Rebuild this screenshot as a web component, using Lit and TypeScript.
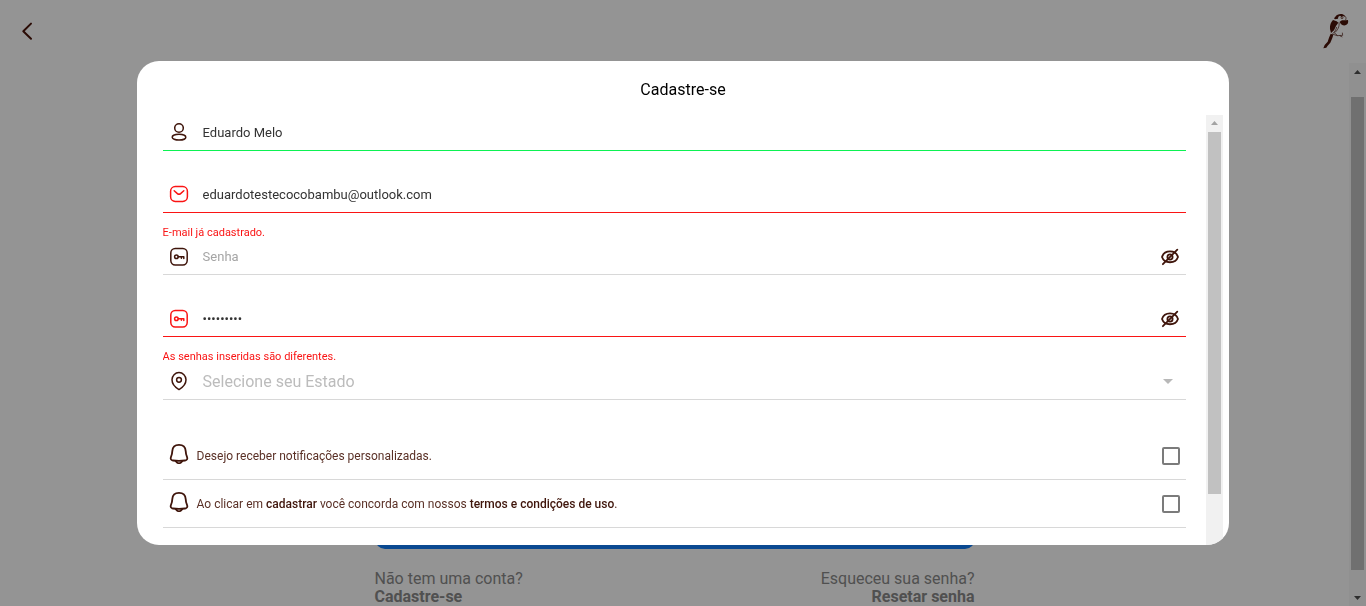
import { LitElement, html, css, svg, nothing } from "lit";
import { customElement, property } from "lit/decorators.js";
import { classMap } from "lit/directives/class-map.js";

const icons = {
  user: svg`<circle cx="10" cy="6" r="4.3"/><ellipse cx="10" cy="15.2" rx="6.8" ry="2.9"/>`,
  mail: svg`<rect x="1.6" y="2.6" width="16.8" height="14.8" rx="4.6"/><path d="M5.2 6.800 8.4 9.6q1.6 1.4 3.2 0l3.200-2.800"/>`,
  key: svg`<rect x="1.8" y="2.600" width="16.4" height="16.4" rx="4.4"/><circle cx="7.4" cy="10.800" r="1.8"/><path d="M9.2 10.800h5.6v1.6M12.4 10.800v1.4"/>`,
  pin: svg`<path d="M10 18.600c-2.200-1.300-7-5-7-9.800a7 7.200 0 0 1 14 0c0 4.800-4.800 8.500-7 9.800z"/><circle cx="10" cy="8.800" r="2.400"/>`,
  bell: svg`<path d="M10 .9c-4.300 0-6.500 2.900-6.700 6.200-.1 2.400-.4 3.800-1.300 5.700-.9 2 .1 3.500 2 3.700q6 .6 12 0c1.900-.2 2.900-1.700 2-3.700-.9-1.900-1.200-3.300-1.300-5.700C16.500 3.800 14.300.9 10 .9z"/><path d="M6.800 17.200q3.200 4.200 6.400 0"/>`,
  eyeOff: svg`<path d="M2 11C4.400 3.600 15.600 3.600 18 11 15.600 18 4.400 18 2 11z"/><circle cx="10" cy="11" r="2.600"/><path d="M17.300 3.600 2.900 18.200"/>`,
};

@customElement("scroll-rail")
export class ScrollRail extends LitElement {
  @property({ type: Number }) start = 0;
  @property({ type: Number }) size = 80;
  @property({ type: Boolean }) down = false;
  @property({ type: Boolean }) strong = false;

  static styles = css`
    :host { display: flex; flex-direction: column; flex: none; width: 17px; background: #f1f1f1; }
    :host([strong]) { background: #f8f8f8; }
    .cap { flex: none; height: 17px; display: flex; align-items: center; justify-content: center; color: #a3a3a3; }
    .strong { color: #505050; }
    .lane { flex: 1; min-height: 0; display: flex; flex-direction: column; padding: 0 2px; }
    .thumb { flex: none; background: #c1c1c1; }
  `;

  render() {
    const cap = classMap({ cap: true, strong: this.strong });
    return html`
      <div class=${cap}><svg width="7" height="4" viewBox="0 0 7 4"><path d="M3.500 0 7 4H0z" fill="currentColor"/></svg></div>
      <div class="lane">
        <div style="height:${this.start}%"></div>
        <div class="thumb" style="height:${this.size}%"></div>
      </div>
      ${this.down
        ? html`<div class=${cap}><svg width="7" height="4" viewBox="0 0 7 4"><path d="M0 0h7L3.500 4z" fill="currentColor"/></svg></div>`
        : nothing}
    `;
  }
}

@customElement("app-root")
export class AppRoot extends LitElement {
  static styles = css`
    :host {
      display: block;
      font-family: Roboto, "Liberation Sans", sans-serif;
      font-size: 16px;
      color: #000;
    }
    *, *::before, *::after { box-sizing: border-box; }
    button { font: inherit; color: inherit; border: 0; padding: 0; background: none; cursor: pointer; }
    .page { display: flex; flex-direction: column; height: 100vh; overflow: hidden; background: #fff; }
    .top {
      flex: none; display: flex; align-items: center; justify-content: space-between;
      height: 63px; padding: 0 16px 2px; color: #4a1409;
    }
    .top button, .top svg { display: block; }
    .body { flex: 1; min-height: 0; display: flex; }
    .login { flex: 1; display: flex; flex-direction: column; justify-content: flex-end; align-items: center; }
    .panel { width: 600px; max-width: 100%; }
    .enter { display: block; width: 100%; height: 48px; border-radius: 10px; background: #127ffa; color: #fff; }
    .links { display: flex; justify-content: space-between; padding-top: 20px; line-height: 19px; color: #8b8b8b; }
    .links p { margin: 0; }
    .links a { display: block; line-height: 18px; color: inherit; font-weight: 700; text-decoration: none; }
    .right { text-align: right; }

    .shade {
      position: fixed; inset: 0; display: flex; align-items: center; justify-content: center;
      background: rgba(0, 0, 0, 0.42);
    }
    .modal {
      display: flex; flex-direction: column; width: 80vw; height: 80vh; overflow: hidden;
      padding: 0 6px 0 26px; border-radius: 22px; background: #fff;
    }
    h1 { flex: none; margin: 0; padding: 19px 20px 15px 0; font-size: 16px; font-weight: 400; line-height: 20px; text-align: center; }
    .scroll { flex: 1; min-height: 0; display: flex; gap: 20px; }
    form { flex: 1; min-width: 0; overflow: hidden; }
    .field { height: 62px; }
    .line {
      display: flex; align-items: center; height: 36px; padding: 0 6px;
      border-bottom: 1px solid #d8d8d8; color: #3f150b;
    }
    .valid .line { border-color: #0cf252; }
    .invalid .line { border-color: #fa1414; }
    .invalid .lead { color: #fa1414; }
    .lead { flex: none; display: flex; }
    svg.icon {
      display: block; flex: none; width: 20px; height: 20px; fill: none; stroke: currentColor;
      stroke-width: 1.5px; stroke-linecap: round; stroke-linejoin: round;
    }
    svg.bold { stroke-width: 1.8px; }
    .line input {
      flex: 1; min-width: 0; height: 30px; margin: 0 0 0 14px; padding: 0; border: 0; outline: 0;
      background: none; font: 13px Roboto, "Liberation Sans", sans-serif; color: #333;
    }
    input::placeholder { color: #a5a5a5; opacity: 1; }
    .error { margin: 0; padding-top: 12px; font-size: 11px; line-height: 16px; color: #fa1414; }
    .line.state { height: 37px; margin-bottom: 32px; padding-top: 1px; }
    .state select {
      flex: 1; height: 34px; margin: 0 0 0 14px; padding: 0; border: 0; outline: 0; appearance: none;
      background: none; font: 16px Roboto, "Liberation Sans", sans-serif; color: #bcbcbc;
    }
    .caret { flex: none; margin-right: 7px; color: #b8b8b8; }
    .check {
      display: flex; align-items: center; height: 48px; padding: 2px 6px 0;
      border-bottom: 1px solid #d8d8d8; font-size: 12px; color: #5a3026;
    }
    .check .icon { align-self: flex-start; margin-top: 10px; color: #3f150b; }
    .check label { flex: 1; padding-left: 8px; }
    .check b { font-weight: 500; color: #3f150b; }
    .check input {
      appearance: none; flex: none; width: 18px; height: 18px; margin: 0;
      border: 2px solid #7b7b7b; border-radius: 2px; background: #fff;
    }
    .check input:checked { background: #7b7b7b; }
  `;

  private icon(name: keyof typeof icons, bold = false) {
    return html`<svg class=${classMap({ icon: true, bold })} viewBox="0 0 20 20" aria-hidden="true">${icons[name]}</svg>`;
  }

  private field(o: {
    id: string; icon: keyof typeof icons; label: string; type: string; value?: string; state?: string; error?: string;
  }) {
    return html`
      <div class=${classMap({ field: true, valid: o.state === "valid", invalid: o.state === "invalid" })}>
        <div class="line">
          <label class="lead" for=${o.id} aria-label=${o.label}>${this.icon(o.icon)}</label>
          <input id=${o.id} type=${o.type} placeholder=${o.label} .value=${o.value ?? ""} autocomplete="off" spellcheck="false" />
          ${o.type === "password"
            ? html`<button type="button" aria-label="Mostrar senha">${this.icon("eyeOff", true)}</button>`
            : nothing}
        </div>
        ${o.error ? html`<p class="error">${o.error}</p>` : nothing}
      </div>
    `;
  }

  private parrot() {
    return html`<svg width="28" height="36" viewBox="0 0 84 108" role="img" aria-label="Coco Bambu">
      <g fill="currentColor">
        <path d="M40 11C45 3 60 0 67 7l2 5-6-3-4 3-5-4-5 3-1 6-9 2-3-3z"/>
        <path d="M33 21l11 4 5 4-7 10-6 13-9 8-3-12c-1-12 3-21 9-27z"/>
        <path d="M53 26l7-4 12 0 6-1c2 8-1 14-8 16-8 1-15-4-17-11z"/>
        <path d="M26 62l8 3-3 10-6 14-8 9-4 6-9 2 4-10 9-10 4-12z"/>
      </g>
      <g fill="none" stroke="currentColor" stroke-width="2">
        <path d="M67 8c5 3 6 7 4 13M51 28c2 13-4 24-15 33M44 42c-2 9-6 15-12 20M30 63l16 5 16-1-1-8M38 60l9 8M53 68l8 4"/>
        <circle cx="60" cy="14" r="3"/>
      </g>
    </svg>`;
  }

  render() {
    return html`
      <div class="page">
        <header class="top">
          <button aria-label="Voltar">
            <svg width="22" height="22" viewBox="0 0 22 22" fill="none" stroke="currentColor" stroke-width="2" stroke-linecap="round" stroke-linejoin="round"><path d="M15 3.600 7.300 11.200 15 18.800"/></svg>
          </button>
          ${this.parrot()}
        </header>
        <div class="body">
          <main class="login">
            <div class="panel">
              <button class="enter" aria-label="Entrar"></button>
              <div class="links">
                <p>Não tem uma conta?<a href="#cadastro">Cadastre-se</a></p>
                <p class="right">Esqueceu sua senha?<a href="#senha">Resetar senha</a></p>
              </div>
            </div>
          </main>
          <scroll-rail .start=${3.3} .size=${93} down strong></scroll-rail>
        </div>
      </div>

      <div class="shade">
        <section class="modal" role="dialog" aria-labelledby="title">
          <h1 id="title">Cadastre-se</h1>
          <div class="scroll">
            <form>
              ${this.field({ id: "name", icon: "user", label: "Nome", type: "text", value: "Eduardo Melo", state: "valid" })}
              ${this.field({ id: "email", icon: "mail", label: "E-mail", type: "email", value: "eduardotestecocobambu@outlook.com", state: "invalid", error: "E-mail já cadastrado." })}
              ${this.field({ id: "password", icon: "key", label: "Senha", type: "password" })}
              ${this.field({ id: "confirm", icon: "key", label: "Confirmar senha", type: "password", value: "cocobambu", state: "invalid", error: "As senhas inseridas são diferentes." })}
              <div class="line state">
                <label class="lead" for="state" aria-label="Estado">${this.icon("pin")}</label>
                <select id="state"><option>Selecione seu Estado</option></select>
                <svg class="caret" width="10" height="5" viewBox="0 0 10 5" aria-hidden="true"><path d="M0 0h10L5 5z" fill="currentColor"/></svg>
              </div>
              <div class="check">
                ${this.icon("bell", true)}
                <label for="news">Desejo receber notificações personalizadas.</label>
                <input id="news" type="checkbox" />
              </div>
              <div class="check">
                ${this.icon("bell", true)}
                <label for="terms">Ao clicar em <b>cadastrar</b> você concorda com nossos <b>termos e condições de uso</b>.</label>
                <input id="terms" type="checkbox" />
              </div>
            </form>
            <scroll-rail .size=${87.6}></scroll-rail>
          </div>
        </section>
      </div>
    `;
  }
}
